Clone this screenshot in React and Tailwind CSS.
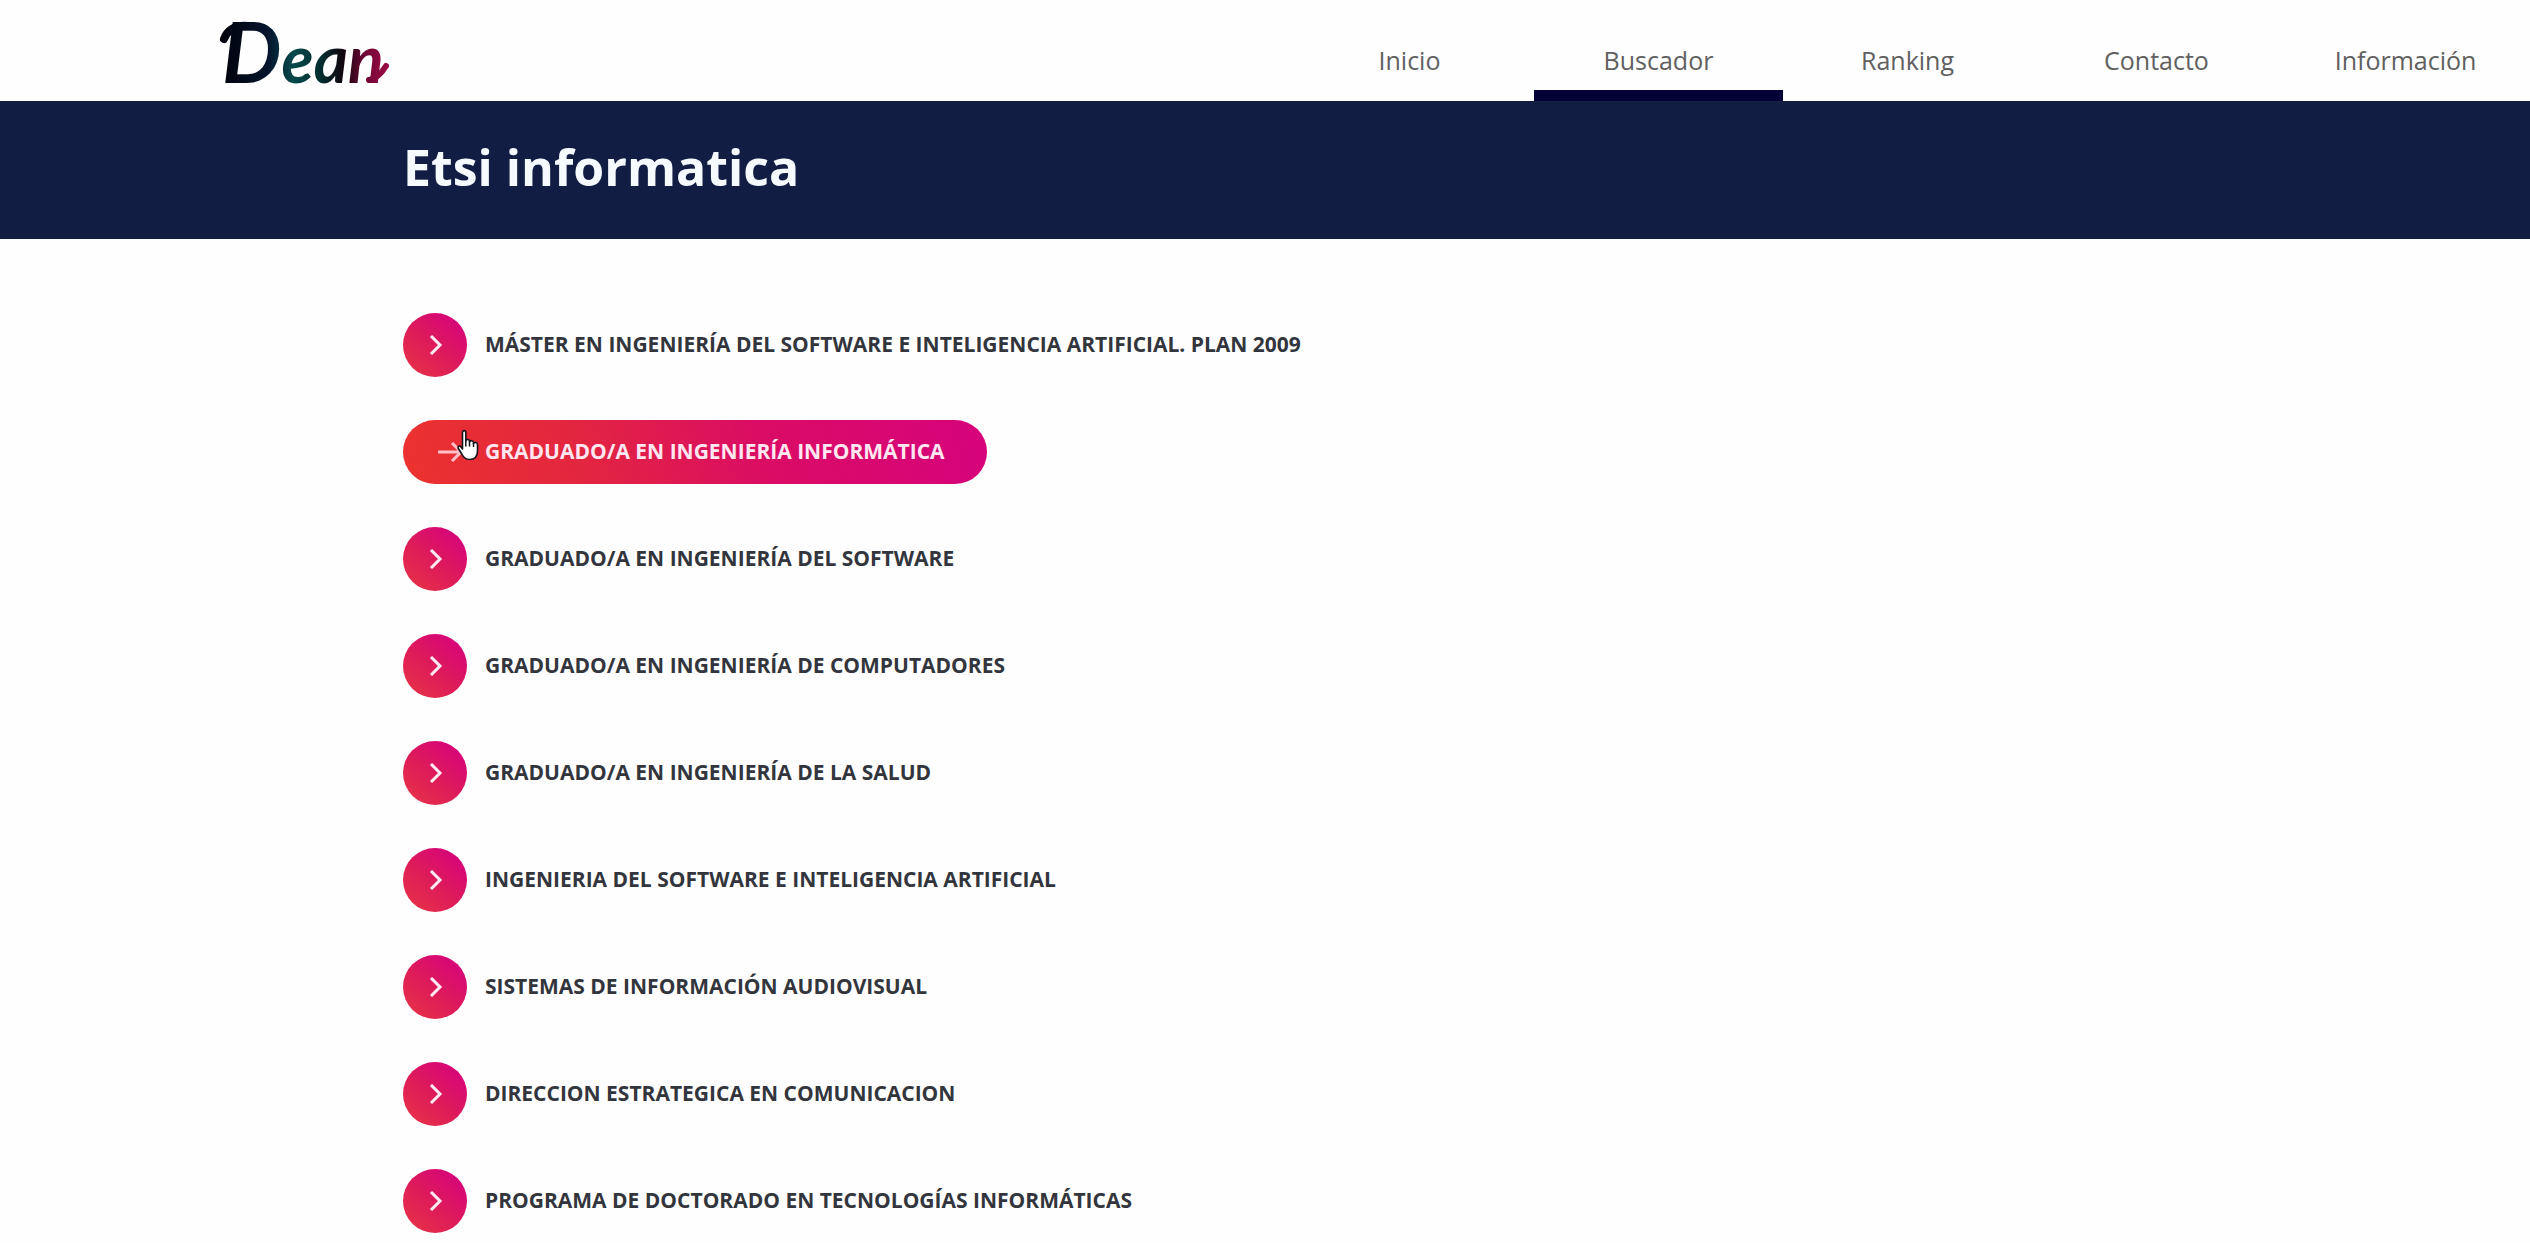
import React from "react";

const NAV = ["Inicio", "Buscador", "Ranking", "Contacto", "Información"];

const DEGREES = [
  "Máster en Ingeniería del Software e Inteligencia Artificial. Plan 2009",
  "Graduado/a en Ingeniería Informática",
  "Graduado/a en Ingeniería del Software",
  "Graduado/a en Ingeniería de Computadores",
  "Graduado/a en Ingeniería de la Salud",
  "Ingenieria del Software e Inteligencia Artificial",
  "Sistemas de Información Audiovisual",
  "Direccion Estrategica en Comunicacion",
  "Programa de Doctorado en Tecnologías Informáticas",
];

function Logo() {
  return (
    <a href="#inicio" aria-label="Dean" className="block">
      <svg viewBox="0 0 180 76" className="block h-[76px] w-[180px] overflow-visible">
        <defs>
          <linearGradient id="ink" gradientUnits="userSpaceOnUse" x1="0" y1="0" x2="172" y2="0">
            <stop offset="0" stopColor="#020008" />
            <stop offset="0.3" stopColor="#04142c" />
            <stop offset="0.45" stopColor="#06494b" />
            <stop offset="0.62" stopColor="#022b2c" />
            <stop offset="0.74" stopColor="#12060f" />
            <stop offset="0.86" stopColor="#6d0634" />
            <stop offset="1" stopColor="#9c0a46" />
          </linearGradient>
        </defs>
        <text x="6" y="69" fill="url(#ink)" className="font-['Lato',sans-serif] font-bold italic">
          <tspan fontSize="84">D</tspan>
          <tspan fontSize="66">ean</tspan>
        </text>
        {/* brush flourishes before the first letter and after the last */}
        <g fill="none" stroke="url(#ink)" strokeLinecap="round">
          <path d="M8 25C12 15 20 11 32 12" strokeWidth="8" />
          <path d="M153 66C160 65 165 60 170 52" strokeWidth="6" />
        </g>
      </svg>
    </a>
  );
}

function Chevron() {
  return (
    <svg viewBox="0 0 20 20" className="h-5 w-5" fill="none" stroke="#ffe9f2" strokeWidth="3">
      <path d="M6 1l9 9-9 9" />
    </svg>
  );
}

function Arrow() {
  return (
    <svg viewBox="0 0 28 20" className="h-5 w-7" fill="none" stroke="#ffc0c8" strokeWidth="3">
      <path d="M1 10h24M15 1l9 9-9 9" />
    </svg>
  );
}

function Pointer() {
  return (
    <svg viewBox="0 0 24 32" className="pointer-events-none absolute left-[54px] top-[9px] h-8 w-6">
      <path
        d="M5.500 3.500C5.500 1 8.800 1 8.800 3.500V12C9.300 9.800 12.300 10 12.500 12V13C13.300 11 16.300 11.300 16.500 13.500V14.500C17.500 12.800 20.500 13.300 20.500 16V22C20.500 28 17 30.500 12.500 30.500C8 30.500 6 27.500 4.500 24.500L1.300 19.500C.3 17.300 2.800 16.300 4 18L5.500 20Z"
        fill="#fff"
        stroke="#14141c"
        strokeWidth="1.600"
        strokeLinejoin="round"
      />
      <path d="M8.800 11.500V17.500M12.500 12.500V17.500M16.500 14V18" fill="none" stroke="#14141c" strokeWidth="1.500" />
    </svg>
  );
}

function Degree({ name, hovered }) {
  if (hovered) {
    return (
      <a
        href="#grado"
        className="relative flex h-16 items-center rounded-full bg-linear-[75deg,#ec322f_0%,#e3263f_30%,#da0c65_62%,#d6037d_100%] pr-[42px] text-[#ffe6f1]"
      >
        <span className="flex w-[82px] justify-end pr-5">
          <Arrow />
        </span>
        {name}
        <Pointer />
      </a>
    );
  }
  return (
    <a href="#grado" className="flex items-center gap-[18px] text-[#33353d]">
      <span className="flex h-16 w-16 items-center justify-center rounded-full bg-linear-[40deg,#e6304a_10%,#de1c58_45%,#d6047c_90%]">
        <Chevron />
      </span>
      {name}
    </a>
  );
}

export default function App() {
  return (
    <div className="min-h-screen overflow-hidden bg-[#fefefe] font-['Open_Sans','Noto_Sans',sans-serif]">
      <header className="flex h-[101px]">
        <div className="w-1/2 pl-[216px] pt-[14px]">
          <Logo />
        </div>
        <nav className="ml-5 grid flex-1 grid-cols-5 text-[25px] text-[#606060]">
          {NAV.map((item) => (
            <a
              key={item}
              href={"#" + item.toLowerCase()}
              aria-current={item === "Buscador" ? "page" : undefined}
              className={
                item === "Buscador"
                  ? "flex items-center justify-center border-b-[11px] border-[#020035] pt-8"
                  : "flex items-center justify-center border-b-[11px] border-transparent pt-8"
              }
            >
              {item}
            </a>
          ))}
        </nav>
      </header>
      <div className="bg-[#111d43] pl-[403px] pb-[36px] pt-[30px]">
        <h1 className="text-[50px] font-bold leading-[72px] text-[#f5faff]">Etsi informatica</h1>
      </div>
      <main className="pl-[403px] pt-[74px]">
        <ul className="flex flex-col items-start gap-[43px] text-[21px] font-bold uppercase">
          {DEGREES.map((name, i) => (
            <li key={name}>
              <Degree name={name} hovered={i === 1} />
            </li>
          ))}
        </ul>
      </main>
    </div>
  );
}
